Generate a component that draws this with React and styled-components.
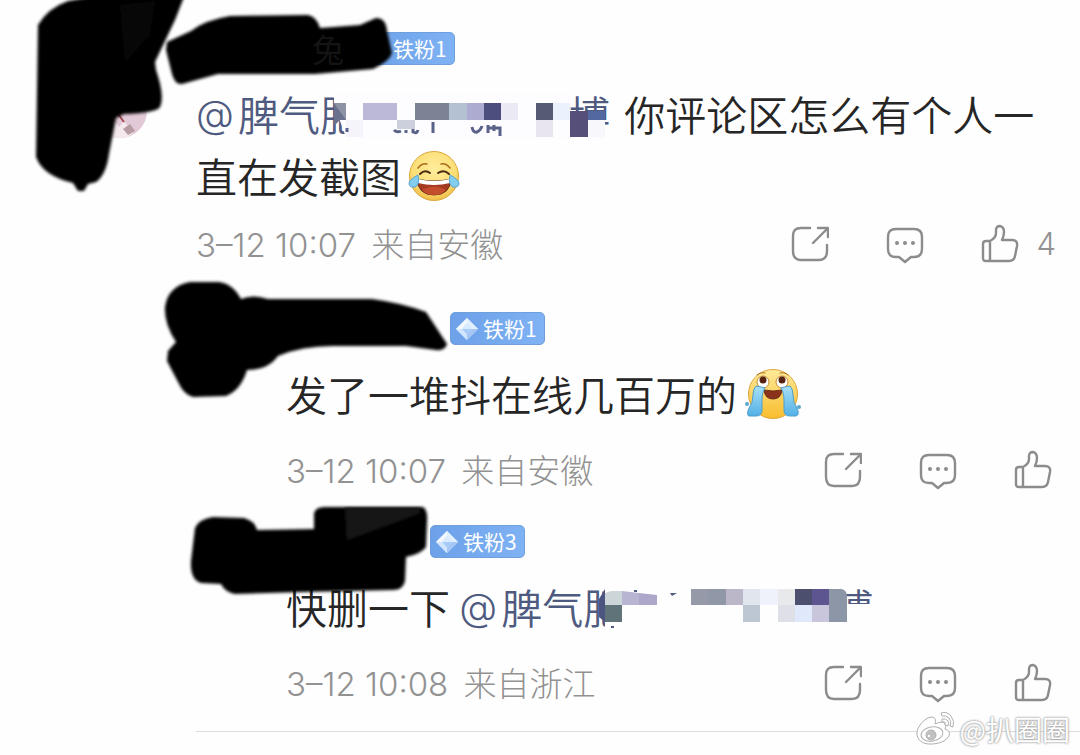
import React from 'react';
import styled, { createGlobalStyle } from 'styled-components';

const Global = createGlobalStyle`
  * { box-sizing: border-box; }
  body {
    margin: 0;
    background: #fefefe;
    font-family: "Noto Sans CJK SC", "Noto Sans", sans-serif;
  }
  button { font: inherit; color: inherit; background: none; border: 0; padding: 0; }
`;

const Page = styled.main`
  position: relative;
  min-height: 100vh;
  padding: 32px 0 22px 196px;
  overflow: hidden;
`;

const Comment = styled.article`
  padding-right: 24px;
`;

const Replies = styled.section`
  display: flex;
  flex-direction: column;
  gap: 35px;
  margin: 48px 0 0 90px;
  padding-bottom: 28px;
`;

const Reply = styled.article`
  position: relative;
  padding-right: 28px;
`;

const NameRow = styled.header`
  display: flex;
  align-items: center;
  height: 33px;
  margin-bottom: 17px;
`;

const Name = styled.span`
  position: relative;
  z-index: 2;
  width: ${(p) => p.$width}px;
  padding-right: 16px;
  text-align: right;
  font-size: 32px;
  line-height: 33px;
  color: #141414;
`;

const Badge = styled.span`
  display: flex;
  align-items: center;
  gap: 4px;
  height: 33px;
  padding: 0 7px 0 4px;
  border: 1px solid #6f9fdc;
  border-radius: 5px;
  background: linear-gradient(100deg, #6ca0e8, #7fb3f4);
  color: #fff;
  font-size: 21px;
  line-height: 31px;
`;

const Body = styled.p`
  margin: 0;
  font-size: 41px;
  line-height: 62px;
  font-weight: 350;
  color: #262626;
`;

const Mention = styled.a`
  position: relative;
  display: inline-block;
  margin-right: 5px;
  color: #4f5a80;
  text-decoration: none;
`;

const At = styled.span`
  display: inline-block;
  width: 42px;
  font-family: Inter, sans-serif;
  font-size: 39px;
  line-height: 40px;
  font-weight: 300;
  vertical-align: 3px;
`;

const Hidden = styled.span`
  display: inline-block;
  width: 208px;
`;

const Mosaic = styled.svg`
  position: absolute;
  top: 2px;
  left: 0;
  width: 416px;
  height: 62px;
`;

const Emoji = styled.svg`
  display: inline-block;
  width: ${(p) => p.$width}px;
  height: 54px;
  margin-left: 7px;
  vertical-align: -10px;
`;

const Footer = styled.footer`
  display: flex;
  align-items: center;
  justify-content: space-between;
  height: 40px;
  margin-top: ${(p) => p.$gap}px;
  color: #929292;
  font-size: 33px;
  font-weight: 300;
  line-height: 40px;
`;

const Time = styled.time`
  margin-right: 8px;
  font-family: Inter, sans-serif;
`;

const Likes = styled.span`
  font-family: Inter, sans-serif;
  font-size: 31px;
`;

const Actions = styled.div`
  display: flex;
  align-items: center;
  gap: 57px;
`;

const Action = styled.button`
  display: flex;
  align-items: center;
  gap: 18px;
  height: 40px;
`;

const Icon = styled.svg`
  width: 38px;
  height: 40px;
  fill: none;
  stroke: #8c8c8c;
  stroke-width: 2.4;
  stroke-linecap: round;
  stroke-linejoin: round;
`;

const Divider = styled.hr`
  margin: 0;
  border: 0;
  border-top: 1px solid #dcdcdc;
`;

const Scribble = styled.svg`
  position: absolute;
  top: ${(p) => p.$top}px;
  left: ${(p) => p.$left}px;
  z-index: 1;
  pointer-events: none;
`;

const Watermark = styled.div`
  position: absolute;
  right: 10px;
  bottom: 8px;
  display: flex;
  align-items: center;
  gap: 4px;
  color: #fff;
  font-size: 28px;
  line-height: 36px;
  text-shadow: 0 0 2px #8a8a8a, 0 0 3px #b4b4b4;
`;

const Diamond = () => (
  <svg width="24" height="24" viewBox="0 0 24 24" aria-hidden="true">
    <path d="M12 1 23 12 12 23 1 12Z" fill="#c9e2ff" />
    <path d="M12 1 23 12H17L12 6Z" fill="#e3f1ff" />
    <path d="M12 1 1 12H7L12 6Z" fill="#f3f9ff" />
    <path d="M7 12H17L12 18Z" fill="#a8cdfa" />
    <path d="M12 6 17 12H7Z" fill="#d9ebff" />
    <path d="M1 12H7L12 18V23Z" fill="#d3e6ff" />
    <path d="M23 12H17L12 18V23Z" fill="#a5c5f4" />
  </svg>
);

const FanBadge = ({ level }) => (
  <Badge><Diamond /><span>铁粉{level}</span></Badge>
);

const ActionBar = ({ likes }) => (
  <Actions>
    <Action aria-label="转发">
      <Icon viewBox="0 0 38 40">
        <path d="M19 4H10Q2 4 2 12V27Q2 36 10 36H28Q36 36 36 27V21M22 19 36 5M27 4H37V13" />
      </Icon>
    </Action>
    <Action aria-label="评论">
      <Icon viewBox="0 0 38 40">
        <path d="M10 5H28Q36 5 36 13V25Q36 33 28 33H25L19 38 13 33H10Q2 33 2 25V13Q2 5 10 5Z" />
        <g fill="#8c8c8c" stroke="none"><circle cx="11" cy="19" r="2" /><circle cx="19" cy="19" r="2" /><circle cx="27" cy="19" r="2" /></g>
      </Icon>
    </Action>
    <Action aria-label="赞">
      <Icon viewBox="0 0 38 40">
        <path d="M9 17Q15 14 15 9V6Q15 2 19 2Q23 3 23 8Q23 12 21 16H31Q37 16 36 22L34 32Q33 37 28 37H5Q2 37 2 34V20Q2 17 5 17ZM9 17V37" />
      </Icon>
      {likes && <Likes>{likes}</Likes>}
    </Action>
  </Actions>
);

const Meta = ({ time, place, likes, gap = 26 }) => (
  <Footer $gap={gap}>
    <span><Time>{time}</Time> 来自{place}</span>
    <ActionBar likes={likes} />
  </Footer>
);

const Cells = ({ cells }) => cells.map(([x, y, w, h, fill]) => (
  <rect key={`${x}-${y}`} x={x} y={y} width={w} height={h} fill={fill} />
));

const FIRST_CELLS = [
  [138, 19, 12, 17, '#8d92a5'], [150, 36, 17, 17, '#f5f4fb'], [167, 19, 34, 17, '#bbb9d7'],
  [201, 36, 18, 9, '#cccfdc'], [219, 19, 34, 17, '#7c8395'], [253, 19, 18, 17, '#b4c1d2'],
  [271, 19, 17, 17, '#adabd0'], [288, 19, 17, 17, '#4e4e7e'], [305, 19, 17, 17, '#ebe9f3'],
  [340, 19, 17, 17, '#555b75'], [340, 36, 17, 17, '#e9e5ee'], [357, 19, 17, 17, '#ebf1fd'],
  [374, 27, 18, 26, '#554f7a'], [392, 27, 17, 9, '#5468a0'], [392, 36, 17, 17, '#f7f7fc'],
];

const SECOND_CELLS = [
  [146, 28, 17, 17, '#5f7378'], [232, 12, 17, 16, '#969aa8'], [249, 12, 18, 16, '#9097a7'],
  [267, 12, 17, 16, '#bbb6c8'], [284, 12, 17, 16, '#e1e5ed'], [301, 12, 18, 16, '#eff2fb'],
  [319, 12, 17, 16, '#e7e9ea'], [336, 12, 17, 16, '#4d4f6e'], [353, 12, 17, 16, '#5c5590'],
  [284, 28, 17, 17, '#bdc6d3'], [319, 28, 17, 17, '#dfe0e7'], [336, 28, 17, 17, '#dfe9fb'],
  [353, 28, 17, 17, '#c9c6dc'],
];

const LaughEmoji = () => (
  <Emoji $width={52} viewBox="0 0 52 54" role="img" aria-label="笑哭">
    <defs>
      <radialGradient id="laughFace" cx=".5" cy=".35" r=".65">
        <stop offset="0" stopColor="#ffed9c" /><stop offset=".7" stopColor="#fadd74" /><stop offset="1" stopColor="#efbd48" />
      </radialGradient>
    </defs>
    <circle cx="26" cy="27" r="24.500" fill="url(#laughFace)" stroke="#dda63b" strokeWidth="1" />
    <path d="M10 19Q14 14 19 15M33 15Q38 14 42 19" fill="none" stroke="#a96c1c" strokeWidth="1.500" strokeLinecap="round" />
    <path d="M12 25Q17 20 22 24M30 24Q36 20 41 25" fill="none" stroke="#4b2a12" strokeWidth="2" strokeLinecap="round" />
    <path d="M9 30Q26 34 43 30Q42 46 26 46Q10 46 9 30Z" fill="#a53a20" stroke="#70331c" strokeWidth="1" />
    <path d="M10 30Q26 34 42 30V34Q26 38 10 34Z" fill="#fff" />
    <path d="M14 41Q26 34 38 41Q34 46 26 46Q18 46 14 41Z" fill="#c44d2c" />
    <path d="M10 26Q12 36 7 38Q1 39 1 34Q2 30 10 26ZM42 26Q40 36 45 38Q51 39 51 34Q50 30 42 26Z" fill="#83cdee" stroke="#57a5cf" strokeWidth="1" />
  </Emoji>
);

const CryEmoji = () => (
  <Emoji $width={58} viewBox="0 0 58 54" role="img" aria-label="大哭">
    <defs>
      <linearGradient id="cryFace" x2="0" y2="1"><stop stopColor="#ffea9a" /><stop offset="1" stopColor="#f8bd2d" /></linearGradient>
      <linearGradient id="tears" x2="0" y2="1"><stop stopColor="#a9e0f6" /><stop offset="1" stopColor="#52b0e6" /></linearGradient>
    </defs>
    <circle cx="29" cy="27" r="24.500" fill="url(#cryFace)" stroke="#dda63b" strokeWidth="1" />
    <path d="M13 8Q16 5 21 6M36 6Q41 5 44 8" fill="none" stroke="#a96c1c" strokeWidth="1" strokeLinecap="round" />
    <circle cx="19" cy="15" r="6" fill="#fff" stroke="#c48934" strokeWidth="1" />
    <circle cx="38" cy="15" r="6" fill="#fff" stroke="#c48934" strokeWidth="1" />
    <circle cx="19" cy="13" r="3.500" fill="#55220f" /><circle cx="38" cy="13" r="3.500" fill="#55220f" />
    <path d="M20 23Q29 25 38 23Q37 32 29 32Q21 32 20 23Z" fill="#8b321c" stroke="#6b3015" strokeWidth="1" />
    <path d="M12 19Q18 20 21 21Q18 25 18 34V43Q18 49 12 49H5Q2 48 5 41Q9 36 9 28Q9 22 12 19ZM46 19Q40 20 37 21Q40 25 40 34V43Q40 49 46 49H52Q56 48 53 41Q49 36 49 28Q49 22 46 19Z" fill="url(#tears)" stroke="#4e9fcb" strokeWidth="1" />
    <circle cx="3" cy="37" r="2" fill="#5ba7cc" /><circle cx="55" cy="40" r="2" fill="#5ba7cc" />
  </Emoji>
);

const WeiboLogo = () => (
  <svg width="40" height="36" viewBox="0 0 40 36" fill="#fff" stroke="#b0b0b0" strokeWidth="1" aria-hidden="true">
    <path d="M29 18Q31 12 26 11Q23 11 19 13Q21 7 16 6Q10 6 4 14Q-1 21 2 27Q6 34 17 33Q29 32 33 25Q35 20 29 18Z" />
    <ellipse cx="16" cy="23" rx="11" ry="7" transform="rotate(-10 16 23)" />
    <circle cx="15" cy="24" r="5" fill="#c4c4c4" />
    <circle cx="13" cy="25" r="2" /><circle cx="17" cy="22" r="1" />
    <path d="M25 2Q31 0 35 5Q39 10 37 16L34 15Q36 10 33 7Q30 4 26 5ZM26 8Q30 7 32 10Q33 12 32 15L29 14Q30 10 26 11Z" />
  </svg>
);

const Soft = () => (
  <defs><filter id="soft" x="-5%" y="-5%" width="110%" height="110%"><feGaussianBlur stdDeviation="1.5" /></filter></defs>
);

export default function App() {
  return (
    <>
      <Global />
      <Page>
        <Scribble $top={0} $left={0} width="480" height="200" viewBox="0 0 480 200" aria-hidden="true">
          <Soft />
          <defs><clipPath id="avatar"><circle cx="120" cy="111" r="27" /></clipPath></defs>
          <g clipPath="url(#avatar)">
            <rect x="96" y="84" width="54" height="54" fill="#e1c9d7" />
            <path d="M110 116 119 127 124 121 133 133 126 138H108Z" fill="#f5e9ed" />
            <path d="M123 129 130 124 135 131 128 135Z" fill="#b79ba3" />
            <path d="M118 114 124 122" stroke="#a34b54" strokeWidth="2" />
          </g>
          <g filter="url(#soft)">
            <path d="M38 25Q48 8 68 1L90-3H184L175 20 155 62 156 70Q165 96 160 107 156 113 124 114L116 118 109 154Q106 175 96 182L88 184 84 191H78L73 183Q43 176 36 157Z" />
            <path d="M167 42 191 31Q205 20 230 16L308 15Q317 17 320 28L360 25 376 18Q386 18 387 31L392 53Q390 61 373 69L315 74H218L182 84Q175 85 172 74L166 50Z" />
          </g>
          <path d="M120 5 155 1 150 35 125 62Z" fill="#111" opacity=".6" filter="url(#soft)" />
        </Scribble>

        <Comment>
          <NameRow><Name $width={164}>兔</Name><FanBadge level={1} /></NameRow>
          <Body>
            <Mention href="#author">
              <At>@</At>脾气肥<Hidden />博
              <Mosaic viewBox="0 0 416 62" aria-hidden="true">
                <path d="M138 8H374V56H151L144 37 138 19Z" fill="#fdfdff" />
                <path d="M374 27H409V56H374Z" fill="#fdfdff" />
                <Cells cells={FIRST_CELLS} />
                <path d="M138 19 150 36H144L138 42Z" fill="#69718f" />
                <path d="M151 44V48M198 46Q201 49 205 47M210 46V49M217 45V48Q221 50 222 46M237 38V49M276 43Q277 49 281 48 285 46 286 42M292 41V49M292 44H304V52M298 41V47" fill="none" stroke="#59638a" strokeWidth="3" />
              </Mosaic>
            </Mention>
            {' '}<span>你评论区怎么有个人一</span><span>直在发截图</span><LaughEmoji />
          </Body>
          <Meta time="3–12 10:07" place="安徽" likes={4} gap={18} />
        </Comment>

        <Replies>
          <Reply>
            <Scribble $top={-42} $left={-136} width="320" height="140" viewBox="150 270 320 140" aria-hidden="true">
              <Soft />
              <path filter="url(#soft)" d="M165 307Q168 286 190 282H219Q233 284 241 299 253 294 268 299H372Q402 303 426 312L447 344Q445 351 436 350L406 346H333Q302 346 278 356 268 370 247 370 241 390 226 396L193 397Q184 395 178 382L167 361 168 351 176 342Q164 324 165 307Z" />
            </Scribble>
            <NameRow><Name $width={164} /><FanBadge level={1} /></NameRow>
            <Body>发了一堆抖在线几百万的<CryEmoji /></Body>
            <Meta time="3–12 10:07" place="安徽" />
          </Reply>
          <Reply>
            <Scribble $top={-35} $left={-106} width="260" height="120" viewBox="180 490 260 120" aria-hidden="true">
              <Soft />
              <path filter="url(#soft)" d="M195 528Q199 519 213 517L244 518Q255 521 257 530L314 529V513Q316 507 324 507H423Q428 510 427 522L426 547Q421 554 406 557L405 581Q403 590 393 590L303 592 235 594Q225 592 221 584L201 583Q190 580 191 561Z" />
              <path filter="url(#soft)" d="M345 508H420V513L347 540Z" fill="#181818" />
            </Scribble>
            <NameRow><Name $width={144} /><FanBadge level={3} /></NameRow>
            <Body>
              快删一下{' '}
              <Mention href="#author">
                <At>@</At>脾气肥<Hidden />博
                <Mosaic viewBox="0 0 416 62" aria-hidden="true">
                  <path d="M146 6H370V56H146Z" fill="#fefeff" />
                  <path d="M370 27H416V56H370Z" fill="#fefeff" />
                  <path d="M146 12 140 22V40L146 45Z" fill="#4c557f" />
                  <path d="M146 16 152 14H163V28H146Z" fill="#ccd6d9" />
                  <path d="M163 14 180 16V28H163Z" fill="#b7b5d1" />
                  <path d="M180 16 198 18V28H180Z" fill="#ada7ca" />
                  <Cells cells={SECOND_CELLS} />
                  <path d="M370 12H382Q388 13 388 19V45H370Z" fill="#8c96a6" />
                  <path d="M211 16H218L213 19ZM175 13H178V15H175ZM152 49H155V51H152Z" fill="#515b80" />
                </Mosaic>
              </Mention>
            </Body>
            <Meta time="3–12 10:08" place="浙江" />
          </Reply>
        </Replies>
        <Divider />
        <Watermark><WeiboLogo /><span>@扒圈圈</span></Watermark>
      </Page>
    </>
  );
}
